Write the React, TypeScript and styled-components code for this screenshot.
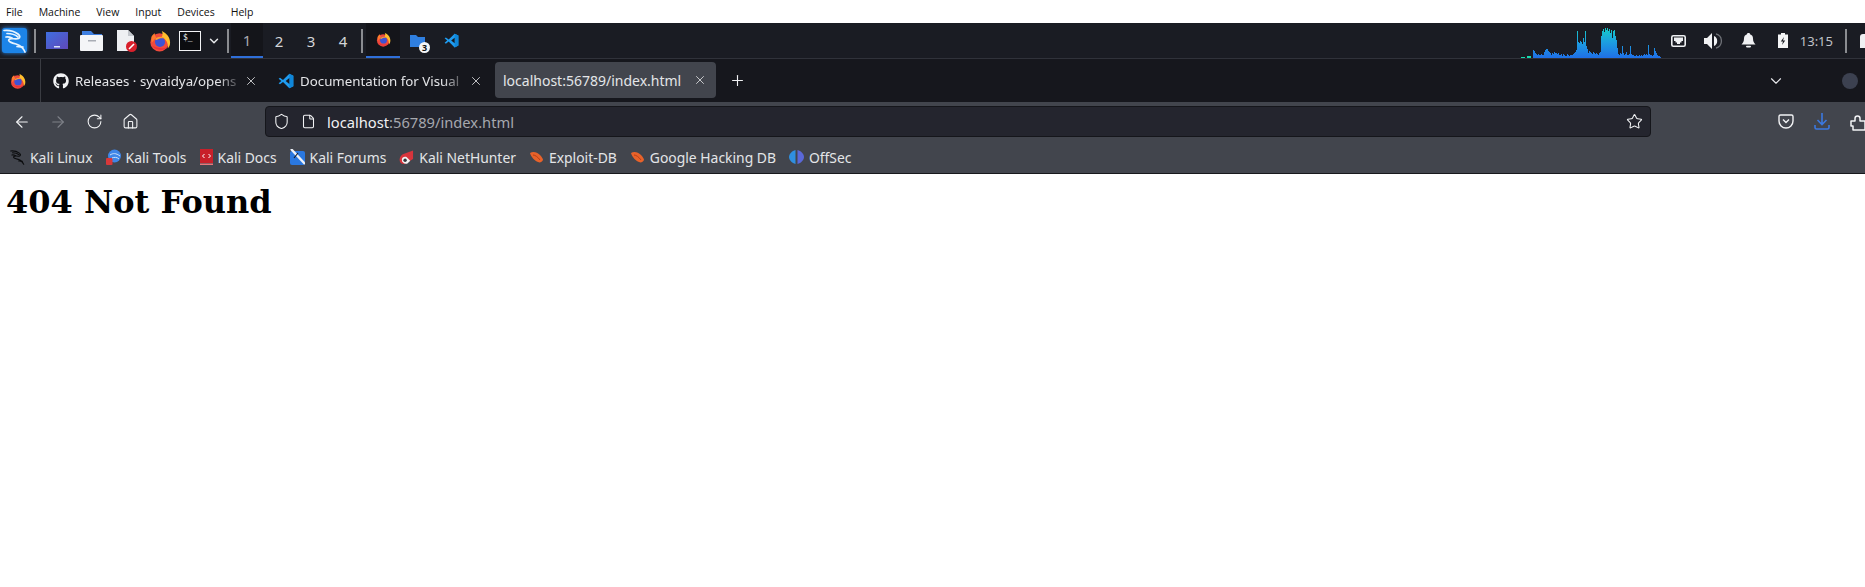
import React from 'react';
import styled, { createGlobalStyle } from 'styled-components';
import { ArrowLeft, ArrowRight, RotateCw, Home, Shield, File, Star, ChevronDown, X, Plus } from 'lucide-react';
import { FaGithub } from 'react-icons/fa';

const GlobalStyle = createGlobalStyle`
    html, body {
        margin: 0;
        padding: 0;
        background: #fff;
        overflow: hidden;
    }
`;

const UI_FONT = `"Noto Sans", "Open Sans", sans-serif`;

const GRAPH = [
    1, 1, 1, 1, 0, 0, 2, 2, 2, 2, 0, 0, 8, 7, 5, 4, 3, 4, 3, 3, 4, 3, 3, 6, 8, 9, 9, 7, 6, 5, 3, 5, 4, 6, 5, 5, 4, 5, 3, 3,
    4, 2, 4, 3, 2, 2, 4, 3, 2, 3, 3, 3, 4, 5, 6, 8, 27, 16, 15, 17, 16, 14, 20, 16, 27, 12, 9, 5, 7, 6, 5, 4, 6, 5, 4, 5, 4, 3, 5, 6,
    22, 27, 29, 26, 30, 28, 30, 27, 29, 25, 28, 20, 27, 28, 22, 18, 10, 4, 3, 5, 4, 12, 5, 3, 4, 6, 3, 3, 4, 12, 4, 3, 3, 2, 2, 3, 2, 2, 3, 2,
    3, 2, 3, 4, 3, 4, 3, 13, 4, 3, 3, 2, 3, 10, 7, 5, 3, 2, 2, 1,
];

const BOOKMARKS = [
    { label: 'Kali Linux', kind: 'dragon' },
    { label: 'Kali Tools', kind: 'tools' },
    { label: 'Kali Docs', kind: 'docs' },
    { label: 'Kali Forums', kind: 'forums' },
    { label: 'Kali NetHunter', kind: 'hunter' },
    { label: 'Exploit-DB', kind: 'bug' },
    { label: 'Google Hacking DB', kind: 'bug' },
    { label: 'OffSec', kind: 'offsec' },
];

const Firefox = ({ size }: { size: number }) => (
    <svg width={size} height={size} viewBox="0 0 24 24">
        <circle cx="11.500" cy="13.500" r="10" fill="#ef4a3c" />
        <path d="M14 1c5 2.500 9 6.500 9 12.500 0 3-1 5-2.500 6.500 1-5-1.500-10-6.500-12.500 1-2 1-4.500 0-6.500z" fill="#ffbe2e" />
        <path d="M2.500 8c.8-2 2-3.500 4-4.500C6 5.500 7 7 8 8l-5 6z" fill="#ff7a2e" />
        <circle cx="12" cy="13" r="5.500" fill="#3d52d5" />
        <path d="M6.500 10c3-3 8-3.500 11-.5-3-.8-7-.5-9 1.500z" fill="#ff9a2e" />
        <path d="M3 17c3 4 9 6 14 4 2-.8 3.500-2 4-3-4 2.500-11 3-18-1z" fill="#e8303c" />
    </svg>
);

const VsCode = ({ size }: { size: number }) => (
    <svg width={size} height={size} viewBox="0 0 24 24">
        <path d="M17 1L7.500 10.500 3 7 1 8.500 5 12l-4 3.500L3 17l4.500-3.500L17 23l6-3V4z" fill="#1f9cf0" />
        <path d="M17 1l6 3v16l-6 3z" fill="#0f86d8" />
        <path d="M17 7.500v9L11.500 12z" fill="#16171d" />
    </svg>
);

const Dragon = ({ size, color }: { size: number; color: string }) => (
    <svg width={size} height={size} viewBox="0 0 24 24" fill="none" stroke={color} strokeWidth="1.700" strokeLinecap="round" strokeLinejoin="round">
        <path d="M1 1.500c5-.5 10 .5 14 3.500 2 1.500 2.500 3.500.5 4.500-3 1.200-8-1-9.500 1-1.500 2 3 3.500 7 4.500 4 1.200 7 3.500 9 8" />
        <path d="M4 4.500c4 0 8 1 11 3.500" />
        <path d="M3 8c2-.5 4 0 6 1" />
        <path d="M14 17.500c2 .2 4 .5 6 .5" />
    </svg>
);

const BookmarkIcon = ({ kind }: { kind: string }) => {
    if (kind === 'dragon') {
        return <Dragon size={15} color="#0b0c0e" />;
    }

    if (kind === 'tools') {
        return (
            <svg width="15" height="16" viewBox="0 0 15 16">
                <circle cx="8.500" cy="7" r="6.500" fill="#3f86e8" />
                <path d="M4 6c3-2 6-2 10 1M6 9c2-1 5-1 7 1" stroke="#cfe2fa" fill="none" strokeWidth="1" />
                <rect x="0" y="9" width="6.500" height="7" rx="1" fill="#d8383a" />
            </svg>
        );
    }

    if (kind === 'docs') {
        return (
            <svg width="13" height="16" viewBox="0 0 13 16">
                <rect width="13" height="14" fill="#c8202a" />
                <rect y="14.500" width="13" height="1.500" fill="#e8787c" />
                <path d="M4.500 5L2.500 7l2 2M8.500 5l2 2-2 2" stroke="#fff" fill="none" strokeWidth="1" />
            </svg>
        );
    }

    if (kind === 'forums') {
        return (
            <svg width="15" height="16" viewBox="0 0 15 16">
                <rect y="2" width="15" height="14" rx="2" fill="#2a78e0" />
                <path d="M1 0l14 15" stroke="#eef2f8" strokeWidth="2.400" />
                <path d="M8 4L4 9" stroke="#1a1c22" strokeWidth="1.200" />
            </svg>
        );
    }

    if (kind === 'hunter') {
        return (
            <svg width="15" height="16" viewBox="0 0 16 16">
                <path d="M15 1L4 5c-3 2-4 5-3 8 1 2 4 3 6 2l8-5z" fill="#d8343c" />
                <path d="M3 11c0-3 3-4 5-3l4 4-3 3c-3 1-6-1-6-4z" fill="#f2f2f2" />
                <circle cx="6.500" cy="11.500" r="1.800" fill="#33363d" />
            </svg>
        );
    }

    if (kind === 'bug') {
        return (
            <svg width="15" height="13" viewBox="0 0 15 13">
                <path d="M1 2c3-2 7-1 10 2 2 2 3 4 3 5-1 2-3 3-5 2C6 10 2 6 1 2z" fill="#e8622a" />
                <path d="M4 4c2 0 5 2 7 5" stroke="#b83e14" fill="none" strokeWidth="1" />
            </svg>
        );
    }

    return (
        <svg width="15" height="16" viewBox="0 0 15 16">
            <path d="M6.500 1C3 2 0 5 0 8s3 6 6.500 7z" fill="#2f8fe0" />
            <path d="M8.500 1c3.500 1 6.500 4 6.500 7s-3 6-6.500 7z" fill="#5a68d8" />
        </svg>
    );
};

const Graph = () => (
    <svg width="140" height="34" viewBox="0 0 140 34">
        <defs>
            <linearGradient id="cpu" gradientUnits="userSpaceOnUse" x1="0" y1="34" x2="0" y2="2">
                <stop offset="0" stopColor="#1f6fe6" />
                <stop offset="0.500" stopColor="#1c9fe0" />
                <stop offset="1" stopColor="#14d2c4" />
            </linearGradient>
        </defs>
        {GRAPH.map((height, index) => (
            <rect key={index} x={index} y={34 - height} width="1" height={height} fill={index < 10 ? '#16dcb0' : 'url(#cpu)'} />
        ))}
    </svg>
);

export default function App() {
    return (
        <Screen>
            <GlobalStyle />
            <MenuBar>
                {['File', 'Machine', 'View', 'Input', 'Devices', 'Help'].map(item => (
                    <MenuItem key={item}>{item}</MenuItem>
                ))}
            </MenuBar>

            <Panel>
                <KaliButton>
                    <Dragon size={24} color="#e8f4ff" />
                </KaliButton>
                <PanelSeparator />
                <Launchers>
                    <svg width="24" height="18" viewBox="0 0 24 18">
                        <defs>
                            <linearGradient id="desk" x1="0" y1="0" x2="1" y2="1">
                                <stop offset="0" stopColor="#3f6fe0" />
                                <stop offset="1" stopColor="#5f48b8" />
                            </linearGradient>
                        </defs>
                        <rect width="22" height="17" x="1" fill="url(#desk)" />
                        <rect x="9" y="14" width="6" height="1.500" fill="#d8e0f8" />
                    </svg>
                    <svg width="24" height="20" viewBox="0 0 24 20">
                        <path d="M2 0h9l3 3h8v4H2z" fill="#3f7fe0" />
                        <rect y="4" width="23" height="16" rx="1" fill="#f4f5f7" />
                        <rect x="8" y="9" width="8" height="1.500" fill="#a9adb5" />
                    </svg>
                    <svg width="23" height="24" viewBox="0 0 23 24">
                        <path d="M2 1h11l6 6v15H2z" fill="#eef0f3" />
                        <path d="M13 1l6 6h-6z" fill="#c2c6cc" />
                        <circle cx="16.500" cy="17.500" r="5.500" fill="#d8202c" />
                        <path d="M14 20l5-5" stroke="#fff" strokeWidth="1.600" />
                    </svg>
                    <Firefox size={22} />
                    <TerminalIcon>$_</TerminalIcon>
                </Launchers>
                <ChevronSlot>
                    <ChevronDown size={14} color="#e6e7ea" strokeWidth={2.500} />
                </ChevronSlot>
                <PanelSeparator />
                <Workspaces>
                    {['1', '2', '3', '4'].map((item, index) => (
                        <Workspace key={item} $active={index === 0}>{item}</Workspace>
                    ))}
                </Workspaces>
                <PanelSeparator />
                <TaskList>
                    <Task $active>
                        <Firefox size={15} />
                    </Task>
                    <Task>
                        <svg width="15" height="12" viewBox="0 0 15 12">
                            <path d="M0 0h6l2 2h7v10H0z" fill="#2f7fe0" />
                        </svg>
                        <TaskBadge>3</TaskBadge>
                    </Task>
                    <Task>
                        <VsCode size={15} />
                    </Task>
                </TaskList>
                <PanelSpacer />
                <GraphSlot>
                    <Graph />
                </GraphSlot>
                <Tray>
                    <TrayIcon>
                        <svg width="15" height="12" viewBox="0 0 15 12">
                            <rect x="0.800" y="0.800" width="13.400" height="10.400" rx="1.500" fill="none" stroke="#eef0f2" strokeWidth="1.600" />
                            <path d="M3 2.500h9V6h-1.500v1.500H9V9H6V7.500H4.500V6H3z" fill="#eef0f2" />
                        </svg>
                    </TrayIcon>
                    <TrayIcon>
                        <svg width="18" height="16" viewBox="0 0 18 16">
                            <path d="M0 5h3l5-5v16l-5-5H0z" fill="#f0f1f3" />
                            <path d="M10 3a5.500 5.500 0 010 10z" fill="#f0f1f3" />
                            <path d="M12 .800a7.500 7.500 0 010 14.400" fill="none" stroke="#6d7076" strokeWidth="1.300" />
                        </svg>
                    </TrayIcon>
                    <TrayIcon>
                        <svg width="15" height="15" viewBox="0 0 15 15">
                            <path d="M7.500 0c1 0 1.500.6 1.500 1.200 2 .6 3 2.300 3 4.300 0 3 1 4.500 2.500 6H.5C2 10 3 8.500 3 5.500c0-2 1-3.700 3-4.300C6 .6 6.500 0 7.500 0z" fill="#f0f1f3" />
                            <rect x="5" y="12.800" width="5" height="1.600" rx="0.800" fill="#f0f1f3" />
                        </svg>
                    </TrayIcon>
                    <TrayIcon>
                        <svg width="10" height="15" viewBox="0 0 10 15">
                            <path d="M3 0h4v1.500h3V15H0V1.500h3z" fill="#f4f5f6" />
                            <path d="M6 4L2.800 8.500H5L4 12l3.200-4.500H5z" fill="#1a1c22" />
                        </svg>
                    </TrayIcon>
                </Tray>
                <Clock>13:15</Clock>
                <PanelSeparator />
                <LockStub />
            </Panel>

            <TabBar>
                <FirefoxView>
                    <Firefox size={16} />
                </FirefoxView>
                <Tabs>
                    <Tab>
                        <FaGithub size={16} color="#f2f3f5" />
                        <TabTitle>Releases · syvaidya/opens</TabTitle>
                        <X size={14} color="#d8d9dc" strokeWidth={1.500} />
                    </Tab>
                    <Tab>
                        <VsCode size={16} />
                        <TabTitle>Documentation for Visual</TabTitle>
                        <X size={14} color="#d8d9dc" strokeWidth={1.500} />
                    </Tab>
                    <ActiveTab>
                        <ActiveTitle>localhost:56789/index.html</ActiveTitle>
                        <X size={14} color="#d8d9dc" strokeWidth={1.500} />
                    </ActiveTab>
                    <NewTab>
                        <Plus size={17} color="#f0f1f3" strokeWidth={1.600} />
                    </NewTab>
                </Tabs>
                <TabBarEnd>
                    <ChevronDown size={18} color="#e8e9ec" strokeWidth={1.500} />
                    <ProfileDot />
                </TabBarEnd>
            </TabBar>

            <NavBar>
                <NavButtons>
                    <NavButton><ArrowLeft size={18} color="#f2f3f5" strokeWidth={1.500} /></NavButton>
                    <NavButton><ArrowRight size={18} color="#7e8188" strokeWidth={1.500} /></NavButton>
                    <NavButton><RotateCw size={17} color="#f2f3f5" strokeWidth={1.500} /></NavButton>
                    <NavButton><Home size={17} color="#f2f3f5" strokeWidth={1.500} /></NavButton>
                </NavButtons>
                <UrlBar>
                    <Shield size={17} color="#f2f3f5" strokeWidth={1.500} />
                    <File size={15} color="#f2f3f5" strokeWidth={1.700} />
                    <UrlText>
                        localhost<UrlDim>:56789/index.html</UrlDim>
                    </UrlText>
                    <Star size={17} color="#f2f3f5" strokeWidth={1.500} />
                </UrlBar>
                <NavEnd>
                    <svg width="16" height="15" viewBox="0 0 16 15">
                        <path d="M2.500 1h11A1.500 1.500 0 0115 2.500V7a7 7 0 01-14 0V2.500A1.500 1.500 0 012.500 1z" fill="none" stroke="#f2f3f5" strokeWidth="1.400" />
                        <path d="M5 5.500l3 3 3-3" fill="none" stroke="#f2f3f5" strokeWidth="1.400" />
                    </svg>
                    <svg width="16" height="18" viewBox="0 0 16 18" fill="none" stroke="#3b78e0" strokeWidth="1.600">
                        <path d="M8 0v11M3.500 7L8 11.500 12.500 7" />
                        <path d="M1 12v2.500A1.500 1.500 0 002.500 16h11a1.500 1.500 0 001.500-1.500V12" />
                    </svg>
                    <svg width="18" height="18" viewBox="0 0 18 18" fill="none" stroke="#f2f3f5" strokeWidth="1.500" strokeLinejoin="round">
                        <path d="M1 8h4V5.500a2.500 2.500 0 015 0V8h5v9H3v-4H1z" />
                    </svg>
                </NavEnd>
            </NavBar>

            <BookmarksBar>
                {BOOKMARKS.map(bookmark => (
                    <Bookmark key={bookmark.label}>
                        <BookmarkIcon kind={bookmark.kind} />
                        <BookmarkLabel>{bookmark.label}</BookmarkLabel>
                    </Bookmark>
                ))}
            </BookmarksBar>

            <Heading>404 Not Found</Heading>
        </Screen>
    );
}

const Screen = styled.div`
    width: 1865px;
    height: 587px;
    overflow: hidden;
    background: #fff;
    font-family: ${UI_FONT};
`;

const MenuBar = styled.div`
    display: flex;
    align-items: center;
    height: 23px;
    padding-left: 6px;
    gap: 16px;
    background: #fff;
    font-family: "Open Sans", sans-serif;
    font-size: 10.500px;
    color: #111;
`;

const MenuItem = styled.span``;

const Panel = styled.div`
    display: flex;
    align-items: center;
    height: 35px;
    background: #1a1c23;
    border-bottom: 1px solid #30323a;
`;

const KaliButton = styled.div`
    display: flex;
    align-items: center;
    justify-content: center;
    width: 25px;
    height: 25px;
    margin-left: 2px;
    margin-right: 7px;
    border-radius: 3px;
    background: #1c84e8;
    box-shadow: 0 0 4px #2a88e8;
`;

const PanelSeparator = styled.div`
    flex: none;
    width: 2px;
    height: 24px;
    background: #8a8c90;
`;

const Launchers = styled.div`
    display: flex;
    align-items: center;
    gap: 11px;
    margin-left: 9px;
`;

const TerminalIcon = styled.div`
    box-sizing: border-box;
    width: 22px;
    height: 20px;
    margin-left: -3px;
    padding-left: 3px;
    border: 1px solid #f2f3f5;
    background: #0c0d10;
    color: #f2f3f5;
    font-family: "DejaVu Sans Mono", monospace;
    font-size: 8px;
    line-height: 11px;
`;

const ChevronSlot = styled.div`
    display: flex;
    width: 14px;
    margin-left: 6px;
    margin-right: 6px;
`;

const Workspaces = styled.div`
    display: flex;
    height: 100%;
    margin-left: 2px;
    margin-right: 2px;
`;

const Workspace = styled.div<{ $active?: boolean }>`
    box-sizing: border-box;
    display: flex;
    align-items: center;
    justify-content: center;
    width: 32px;
    height: 35px;
    padding-top: 1px;
    font-size: 15px;
    color: #d4d5d8;
    ${props => props.$active && `
        background: #14151a;
        color: #a8aab0;
        border-bottom: 2px solid #2f6fd8;
    `}
`;

const TaskList = styled.div`
    display: flex;
    height: 100%;
    margin-left: 3px;
`;

const Task = styled.div<{ $active?: boolean }>`
    position: relative;
    box-sizing: border-box;
    display: flex;
    align-items: center;
    justify-content: center;
    width: 34px;
    height: 35px;
    ${props => props.$active && `
        background: #14151a;
        border-bottom: 2px solid #2f6fd8;
    `}
`;

const TaskBadge = styled.span`
    position: absolute;
    right: 4px;
    bottom: 5px;
    width: 11px;
    height: 11px;
    border-radius: 50%;
    background: #f4f5f6;
    color: #111;
    font-size: 9px;
    font-weight: 700;
    line-height: 11px;
    text-align: center;
`;

const PanelSpacer = styled.div`
    flex: 1;
`;

const GraphSlot = styled.div`
    display: flex;
    align-self: flex-end;
`;

const Tray = styled.div`
    display: flex;
    align-items: center;
`;

const TrayIcon = styled.div`
    display: flex;
    align-items: center;
    justify-content: center;
    width: 35px;
`;

const Clock = styled.div`
    margin-left: -1px;
    margin-right: 12px;
    font-size: 13px;
    color: #c0c2c8;
`;

const LockStub = styled.div`
    flex: none;
    width: 5px;
    height: 14px;
    margin-left: 13px;
    border-radius: 3px 0 0 0;
    background: #f0f1f3;
`;

const TabBar = styled.div`
    display: flex;
    align-items: stretch;
    height: 43px;
    background: #16171d;
`;

const FirefoxView = styled.div`
    display: flex;
    align-items: center;
    justify-content: center;
    box-sizing: border-box;
    width: 41px;
    padding-right: 4px;
    border-right: 1px solid #3a3c42;
`;

const Tabs = styled.div`
    display: flex;
    align-items: center;
    flex: 1;
    padding-left: 12px;
`;

const Tab = styled.div`
    display: flex;
    align-items: center;
    width: 225px;
    gap: 6px;
    font-size: 13.300px;
    color: #e4e5e8;
`;

const TabTitle = styled.span`
    width: 168px;
    margin-right: -5px;
    white-space: nowrap;
    -webkit-mask-image: linear-gradient(to right, #000 85%, transparent);
    mask-image: linear-gradient(to right, #000 85%, transparent);
`;

const ActiveTab = styled.div`
    box-sizing: border-box;
    display: flex;
    align-items: center;
    justify-content: space-between;
    width: 221px;
    height: 36px;
    margin-left: -8px;
    margin-top: -1px;
    padding: 0 9px 0 8px;
    border-radius: 4px;
    background: #42454d;
    font-size: 14px;
    color: #e4e5e8;
`;

const ActiveTitle = styled.span`
    white-space: nowrap;
`;

const NewTab = styled.div`
    display: flex;
    margin-left: 13px;
`;

const TabBarEnd = styled.div`
    display: flex;
    align-items: center;
    gap: 57px;
    padding-right: 7px;
`;

const ProfileDot = styled.div`
    width: 16px;
    height: 16px;
    border-radius: 50%;
    background: #3c4150;
`;

const NavBar = styled.div`
    display: flex;
    align-items: center;
    height: 39px;
    background: #42454d;
`;

const NavButtons = styled.div`
    display: flex;
    align-items: center;
    flex: none;
    width: 265px;
    padding-left: 4px;
    box-sizing: border-box;
`;

const NavButton = styled.div`
    display: flex;
    justify-content: center;
    width: 36px;
`;

const UrlBar = styled.div`
    box-sizing: border-box;
    display: flex;
    flex: none;
    align-items: center;
    width: 1386px;
    height: 31px;
    padding: 0 7px;
    gap: 11px;
    border: 1px solid #15161b;
    border-radius: 4px;
    background: #24252e;
`;

const UrlText = styled.div`
    flex: 1;
    font-size: 14.700px;
    color: #f0f1f3;
`;

const UrlDim = styled.span`
    color: #a6a8ae;
`;

const NavEnd = styled.div`
    display: flex;
    flex: none;
    align-items: center;
    gap: 20px;
    margin-left: 127px;
`;

const BookmarksBar = styled.div`
    display: flex;
    align-items: center;
    height: 32px;
    padding-left: 10px;
    gap: 13px;
    background: #42454d;
    border-bottom: 1px solid #17181c;
`;

const Bookmark = styled.div`
    display: flex;
    align-items: center;
    gap: 5px;
`;

const BookmarkLabel = styled.span`
    font-size: 13.900px;
    color: #e4e5e8;
`;

const Heading = styled.h1`
    margin: 9px 0 0 6px;
    font-family: "DejaVu Serif", serif;
    font-size: 32px;
    font-weight: 700;
    line-height: 38px;
    color: #000;
`;
